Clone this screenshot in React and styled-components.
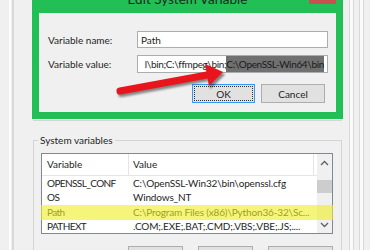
import styled, { createGlobalStyle } from "styled-components";

const GlobalStyle = createGlobalStyle`
  html, body {
    margin: 0;
    padding: 0;
    background: #f0f0f0;
  }
  body {
    font-family: Lato, "Liberation Sans", sans-serif;
    font-size: 10px;
    color: #1e1e1e;
  }
`;

const ROWS = [
  { name: "OPENSSL_CONF", value: "C:\\OpenSSL-Win32\\bin\\openssl.cfg" },
  { name: "OS", value: "Windows_NT" },
  { name: "Path", value: "C:\\Program Files (x86)\\Python36-32\\Sc..." },
  { name: "PATHEXT", value: ".COM;.EXE;.BAT;.CMD;.VBS;.VBE;.JS;...." },
];

function Chevron({ down }) {
  return (
    <svg width="9" height="6" viewBox="0 0 9 6">
      <polyline
        points={down ? "1,1 4.5,4.5 8,1" : "1,5 4.5,1.5 8,5"}
        fill="none"
        stroke="#606060"
        strokeWidth="1.3"
      />
    </svg>
  );
}

function RedArrow() {
  return (
    <ArrowLayer viewBox="0 0 370 250">
      <defs>
        <filter id="arrowShadow" x="-10%" y="-30%" width="130%" height="180%">
          <feGaussianBlur stdDeviation="1.2" />
        </filter>
      </defs>
      <g transform="translate(1.5 2.5)" fill="#000" stroke="#000" opacity="0.45" filter="url(#arrowShadow)">
        <line x1="120" y1="91" x2="207" y2="75" strokeWidth="7" strokeLinecap="round" />
        <polygon points="205,64 223,72 209,86" />
      </g>
      <line x1="120" y1="91" x2="207" y2="75" stroke="#e8161c" strokeWidth="7" strokeLinecap="round" />
      <polygon points="205,64 223,72 209,86" fill="#e8161c" />
    </ArrowLayer>
  );
}

export default function App() {
  return (
    <>
      <GlobalStyle />
      <Screen>
        <LeftFrame>
          <BackEdge />
        </LeftFrame>

        <Main>
          <UserGroupEnd />
          <SystemGroup>
            <Legend>System variables</Legend>
            <VarList>
              <ListBody>
                <HeaderRow>
                  <HeaderCell $w={87} $pad={5}>Variable</HeaderCell>
                  <HeaderCell $w={185} $pad={4}>Value</HeaderCell>
                </HeaderRow>
                {ROWS.map((r) => (
                  <Row key={r.name}>
                    <Cell $w={87} $pad={5} $tight>{r.name}</Cell>
                    <Cell $w={185} $pad={4}>{r.value}</Cell>
                  </Row>
                ))}
              </ListBody>
              <ScrollBar>
                <ScrollArrow><Chevron /></ScrollArrow>
                <Track>
                  <Thumb />
                </Track>
                <ScrollArrow><Chevron down /></ScrollArrow>
              </ScrollBar>
              <Marker />
            </VarList>
            <BottomButtons>
              <ButtonTop $w={55} />
              <ButtonTop $w={55} />
              <ButtonTop $w={65} />
            </BottomButtons>
          </SystemGroup>
        </Main>

        <RightFrame>
          <SideEdge $gap={7} />
          <SideEdge $gap={5} />
        </RightFrame>

        <EditDialog>
          <TitleBar>
            Edit System Variable
            <CloseButton />
          </TitleBar>
          <Panel>
            <FieldRow>
              <Label>Variable name:</Label>
              <TextBox $h={17}>Path</TextBox>
            </FieldRow>
            <FieldRow $gap={7}>
              <Label>Variable value:</Label>
              <TextBox $h={18} $end>
                <span>l\bin;C:\ffmpeg\bin;</span>
                <Selected>C:\OpenSSL-Win64\bin</Selected>
              </TextBox>
            </FieldRow>
            <DialogButtons>
              <PushButton $w={63} $focused>OK</PushButton>
              <PushButton $w={64}>Cancel</PushButton>
            </DialogButtons>
          </Panel>
        </EditDialog>

        <RedArrow />
      </Screen>
    </>
  );
}

const Screen = styled.div`
  position: relative;
  width: 370px;
  height: 250px;
  overflow: hidden;
  display: flex;
  background: #f0f0f0;
`;

// window edges behind the dialogs

const LeftFrame = styled.div`
  width: 33px;
  flex: none;
  display: flex;
  padding-left: 9px;
  box-sizing: border-box;
`;

const BackEdge = styled.div`
  width: 1px;
  border-left: 2px solid #fcfcfc;
  border-right: 2px solid #d9d9d9;
  background: #f0f0f0;
`;

const RightFrame = styled.div`
  flex: 1;
  display: flex;
`;

const SideEdge = styled.div`
  width: 3px;
  margin-left: ${({ $gap }) => $gap}px;
  border-left: 1px solid #d8d8d8;
  border-right: 1px solid #d8d8d8;
  background: #fbfbfb;
`;

// Environment Variables dialog

const Main = styled.div`
  width: 309px;
  flex: none;
  display: flex;
  flex-direction: column;
`;

const UserGroupEnd = styled.div`
  height: 121px;
  flex: none;
  box-sizing: border-box;
  border: 1px solid #d5d5d5;
  border-top: none;
`;

const SystemGroup = styled.fieldset`
  margin: 13px 0 0;
  padding: 7px 8px 0 7px;
  border: 1px solid #d5d5d5;
  min-width: 0;
  flex: 1;
`;

const Legend = styled.legend`
  padding: 0 2px;
  margin-left: -3px;
  font-size: 10px;
  line-height: 12px;
  color: #1e1e1e;
`;

const VarList = styled.div`
  position: relative;
  height: 81px;
  box-sizing: border-box;
  border: 1px solid #828790;
  background: #fff;
  display: flex;
`;

const ListBody = styled.div`
  flex: 1;
  display: flex;
  flex-direction: column;
`;

const HeaderRow = styled.div`
  display: flex;
  height: 22px;
  box-sizing: border-box;
  border-bottom: 1px solid #e5e5e5;
`;

const HeaderCell = styled.div`
  width: ${({ $w }) => $w}px;
  padding-left: ${({ $pad }) => $pad}px;
  box-sizing: border-box;
  border-right: 1px solid #e5e5e5;
  display: flex;
  align-items: center;
`;

const Row = styled.div`
  display: flex;
  height: 14.5px;
  align-items: center;
`;

const Cell = styled.div`
  width: ${({ $w }) => $w}px;
  padding-left: ${({ $pad }) => $pad}px;
  box-sizing: border-box;
  white-space: nowrap;
  overflow: hidden;
  letter-spacing: ${({ $tight }) => ($tight ? "-0.6px" : "-0.15px")};
`;

const ScrollBar = styled.div`
  width: 15px;
  flex: none;
  background: #f0f0f0;
  display: flex;
  flex-direction: column;
`;

const ScrollArrow = styled.div`
  height: 17px;
  display: flex;
  align-items: center;
  justify-content: center;
`;

const Track = styled.div`
  flex: 1;
  padding-top: 9px;
`;

const Thumb = styled.div`
  height: 13px;
  background: #cdcdcd;
`;

const Marker = styled.div`
  position: absolute;
  left: -1px;
  right: -1px;
  top: 51px;
  height: 15px;
  background: rgba(238, 238, 35, 0.6);
`;

const BottomButtons = styled.div`
  display: flex;
  justify-content: flex-end;
  gap: 15px;
  margin-top: 12px;
`;

const ButtonTop = styled.div`
  width: ${({ $w }) => $w}px;
  height: 20px;
  box-sizing: border-box;
  border: 1px solid #adadad;
  background: #e1e1e1;
`;

// Edit System Variable dialog, lying over the other window

const EditDialog = styled.div`
  position: absolute;
  left: 32px;
  top: -18px;
  width: 311px;
  box-sizing: border-box;
  padding: 0 7px 7px;
  background: #21bf55;
  display: flex;
  flex-direction: column;
`;

const TitleBar = styled.div`
  position: relative;
  height: 31px;
  box-sizing: border-box;
  padding-top: 9px;
  display: flex;
  justify-content: center;
  font-size: 13.5px;
  line-height: 16px;
  color: #1f2a22;
`;

const CloseButton = styled.div`
  position: absolute;
  right: 0;
  top: 2px;
  width: 27px;
  height: 20px;
  background: #c75050;
`;

const Panel = styled.div`
  height: 99px;
  box-sizing: border-box;
  padding: 18px 8px 0 9px;
  background: #f0f0f0;
  display: flex;
  flex-direction: column;
`;

const FieldRow = styled.div`
  display: flex;
  align-items: center;
  margin-top: ${({ $gap }) => $gap || 0}px;
`;

const Label = styled.div`
  width: 89px;
  flex: none;
`;

const TextBox = styled.div`
  width: 191px;
  height: ${({ $h }) => $h}px;
  box-sizing: border-box;
  border: 1px solid #abadb3;
  background: #fff;
  display: flex;
  align-items: center;
  justify-content: ${({ $end }) => ($end ? "flex-end" : "flex-start")};
  padding: ${({ $end }) => ($end ? "0 3px 0 0" : "0 3px")};
  overflow: hidden;
  white-space: nowrap;
  letter-spacing: ${({ $end }) => ($end ? "-0.35px" : "0")};
`;

const Selected = styled.span`
  align-self: stretch;
  display: flex;
  align-items: center;
  background: #707070;
  color: #1a1a1a;
`;

const DialogButtons = styled.div`
  display: flex;
  justify-content: flex-end;
  gap: 6px;
  margin-top: 11px;
  padding-right: 3px;
`;

const PushButton = styled.div`
  width: ${({ $w }) => $w}px;
  height: 19px;
  box-sizing: border-box;
  border: 1px solid ${({ $focused }) => ($focused ? "#3399ff" : "#adadad")};
  background: #e1e1e1;
  display: flex;
  align-items: center;
  justify-content: center;
  outline: ${({ $focused }) => ($focused ? "1px dotted #333" : "none")};
  outline-offset: -3px;
`;

const ArrowLayer = styled.svg`
  position: absolute;
  left: 0;
  top: 0;
  width: 370px;
  height: 250px;
  pointer-events: none;
`;
